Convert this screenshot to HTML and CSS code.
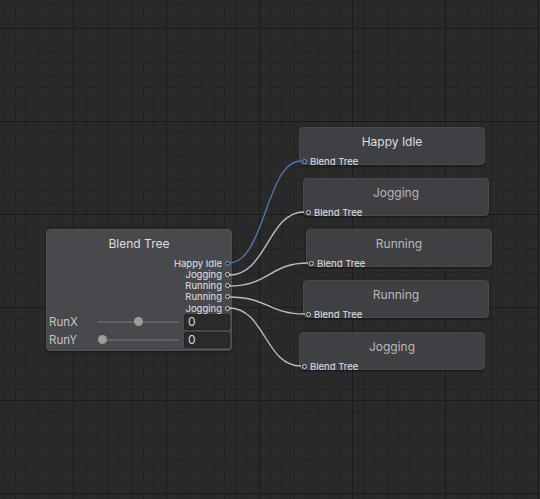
FILE: index.html
```html
<!DOCTYPE html>
<html>
<head>
<meta charset="utf-8">
<link rel="stylesheet" href="styles.css">
</head>
<body>
<div class="canvas">
  <div class="node blend" style="left:46px;top:229px">
    <div class="title">Blend Tree</div>
    <div class="outputs">
      <div class="out"><span>Happy Idle</span><i class="dot blue"></i></div>
      <div class="out"><span>Jogging</span><i class="dot"></i></div>
      <div class="out"><span>Running</span><i class="dot"></i></div>
      <div class="out"><span>Running</span><i class="dot"></i></div>
      <div class="out"><span>Jogging</span><i class="dot"></i></div>
    </div>
    <div class="params">
      <div class="param">
        <span class="plabel">RunX</span>
        <div class="slider"><div class="track"></div><div class="thumb" style="left:36px"></div></div>
        <div class="field">0</div>
      </div>
      <div class="param">
        <span class="plabel">RunY</span>
        <div class="slider"><div class="track"></div><div class="thumb" style="left:0px"></div></div>
        <div class="field">0</div>
      </div>
    </div>
  </div>

  <div class="node clip active" style="left:299px;top:127px">
    <div class="title">Happy Idle</div>
    <div class="in"><i class="dot blue"></i><span>Blend Tree</span></div>
  </div>
  <div class="node clip" style="left:303px;top:178px">
    <div class="title">Jogging</div>
    <div class="in"><i class="dot"></i><span>Blend Tree</span></div>
  </div>
  <div class="node clip" style="left:306px;top:229px">
    <div class="title">Running</div>
    <div class="in"><i class="dot"></i><span>Blend Tree</span></div>
  </div>
  <div class="node clip" style="left:303px;top:280px">
    <div class="title">Running</div>
    <div class="in"><i class="dot"></i><span>Blend Tree</span></div>
  </div>
  <div class="node clip" style="left:299px;top:332px">
    <div class="title">Jogging</div>
    <div class="in"><i class="dot"></i><span>Blend Tree</span></div>
  </div>

  <svg class="edges" width="540" height="499" viewBox="0 0 540 499">
    <path class="edge blue" d="M229,263 C265,263 266,161 301,161"/>
    <path class="edge" d="M229,275 C267,275 268,212 304,212"/>
    <path class="edge" d="M229,286 C269,286 270,263 308,263"/>
    <path class="edge" d="M229,297 C268,297 268,314 305,314"/>
    <path class="edge" d="M229,308 C265,308 265,366 301,366"/>
  </svg>
</div>
</body>
</html>
```
FILE: styles.css
```css
html, body {
  margin: 0;
  padding: 0;
  background: #282828;
}
.canvas {
  position: relative;
  width: 540px;
  height: 499px;
  overflow: hidden;
  background-color: #2a2a2a;
  background-image:
    linear-gradient(to right, #1b1b1b 1px, transparent 1px),
    linear-gradient(to bottom, #1b1b1b 1px, transparent 1px),
    linear-gradient(to right, #232323 1px, transparent 1px),
    linear-gradient(to bottom, #232323 1px, transparent 1px);
  background-size: 93px 93px, 93px 93px, 11.625px 11.625px, 11.625px 11.625px;
  background-position: 73px 28px, 73px 28px, 73px 28px, 73px 28px;
  font-family: Inter, "Noto Sans", "DejaVu Sans", sans-serif;
}
.node {
  position: absolute;
  box-sizing: border-box;
  width: 186px;
  border-radius: 4px;
  border: 1px solid #505154;
  box-shadow: 0 1px 2px rgba(0,0,0,0.5);
}
.blend {
  height: 122px;
  background: #48494d;
  display: flex;
  flex-direction: column;
}
.clip {
  height: 38px;
  background: #3f4044;
  border-color: #4a4b4f;
}
.title {
  height: 27px;
  line-height: 27px;
  text-align: center;
  font-size: 12px;
  color: #b9b9b9;
}
.blend .title, .active .title {
  color: #dedede;
}
.outputs {
  padding-top: 0.4px;
  display: flex;
  flex-direction: column;
}
.out {
  height: 11.25px;
  display: flex;
  align-items: center;
  justify-content: flex-end;
  gap: 3px;
  padding-right: 1px;
  font-size: 9.5px;
  color: #e2e2e2;
}
.dot {
  display: block;
  box-sizing: border-box;
  width: 5px;
  height: 5px;
  border-radius: 50%;
  border: 1.2px solid #d4d4d4;
  background: #2a2a2a;
}
.dot.blue {
  border-color: #6f9fd8;
}
.params {
  display: flex;
  flex-direction: column;
  gap: 2px;
  padding-top: 0.3px;
}
.param {
  height: 16px;
  display: flex;
  align-items: center;
  padding-left: 2px;
}
.plabel {
  width: 48px;
  font-size: 11.5px;
  color: #c4c4c4;
}
.slider {
  position: relative;
  width: 81px;
  height: 16px;
  margin-left: 1px;
}
.track {
  position: absolute;
  left: 0;
  right: 0;
  top: 7px;
  height: 2px;
  background: #606164;
}
.thumb {
  position: absolute;
  top: 3.5px;
  width: 9px;
  height: 9px;
  border-radius: 50%;
  background: #9c9c9c;
}
.field {
  box-sizing: border-box;
  margin-left: 5px;
  width: 46px;
  height: 16px;
  line-height: 14px;
  padding-left: 3px;
  font-size: 12px;
  color: #d6d6d6;
  background: #2a2a2a;
  border: 1px solid #232323;
  border-radius: 2px;
}
.clip .title {
  height: 27px;
  line-height: 27px;
}
.in {
  height: 10px;
  display: flex;
  align-items: center;
  gap: 3px;
  padding-left: 2px;
  margin-top: 1px;
  font-size: 9.5px;
  color: #e2e2e2;
}
.edges {
  position: absolute;
  left: 0;
  top: 0;
  pointer-events: none;
}
.edge {
  fill: none;
  stroke: #bdbdbd;
  stroke-width: 1.4;
}
.edge.blue {
  stroke: #4a78b0;
}
```
